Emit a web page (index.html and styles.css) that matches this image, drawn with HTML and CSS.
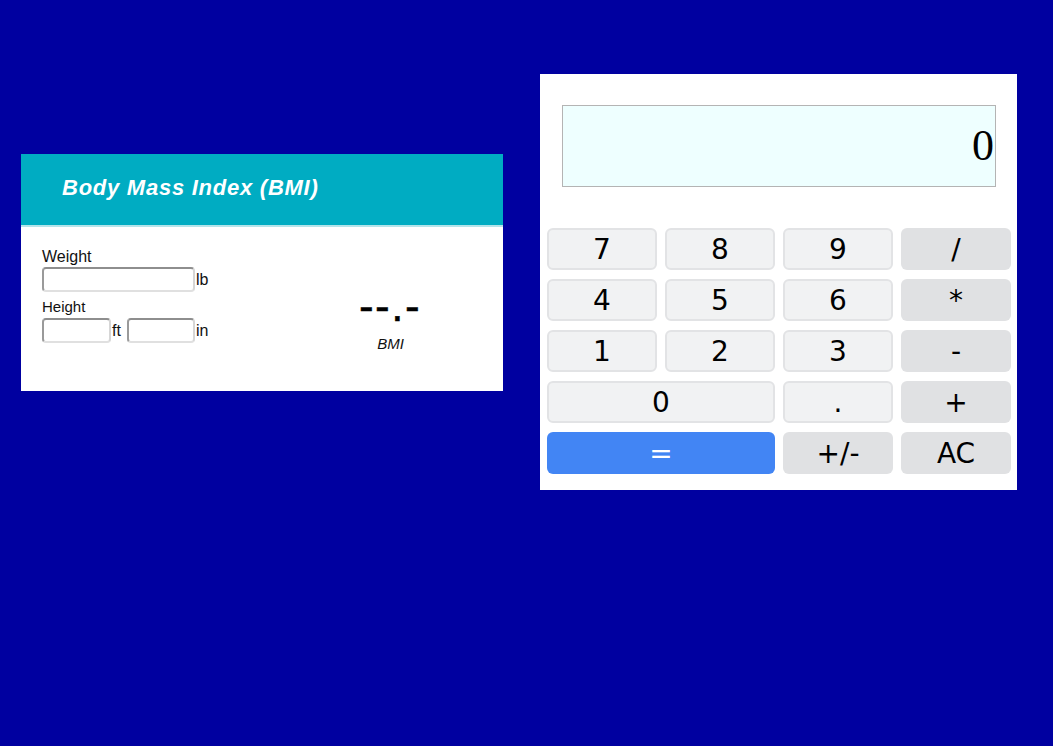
FILE: index.html
```html
<!DOCTYPE html>
<html>
<head>
<meta charset="utf-8">
<link rel="stylesheet" href="styles.css">
</head>
<body>
<div class="page">
  <section class="bmi">
    <header class="bmi-head"><h1>Body Mass Index (BMI)</h1></header>
    <div class="bmi-body">
      <div class="bmi-form">
        <label class="lbl lbl-w">Weight</label>
        <div class="row row-w"><input class="inp inp-w" type="text"><span class="unit">lb</span></div>
        <label class="lbl lbl-h">Height</label>
        <div class="row row-h"><input class="inp inp-h" type="text"><span class="unit">ft</span><input class="inp inp-h inp-in" type="text"><span class="unit">in</span></div>
      </div>
      <div class="bmi-result">
        <div class="value">--.-</div>
        <div class="caption">BMI</div>
      </div>
    </div>
  </section>
  <section class="calc">
    <div class="display">0</div>
    <div class="keys">
      <button class="key num">7</button>
      <button class="key num">8</button>
      <button class="key num">9</button>
      <button class="key op">/</button>
      <button class="key num">4</button>
      <button class="key num">5</button>
      <button class="key num">6</button>
      <button class="key op">*</button>
      <button class="key num">1</button>
      <button class="key num">2</button>
      <button class="key num">3</button>
      <button class="key op">-</button>
      <button class="key num span2">0</button>
      <button class="key num">.</button>
      <button class="key op">+</button>
      <button class="key eq span2">=</button>
      <button class="key op">+/-</button>
      <button class="key op">AC</button>
    </div>
  </section>
</div>
</body>
</html>
```
FILE: styles.css
```css
html, body {
  margin: 0;
  padding: 0;
  background: #0000a0;
  height: 100%;
}
.page {
  display: flex;
  align-items: flex-start;
  padding: 74px 0 0 21px;
  gap: 37px;
}
.bmi {
  margin-top: 80px;
  width: 482px;
  height: 237px;
  background: #fff;
  font-family: "Liberation Sans", Arial, sans-serif;
  display: flex;
  flex-direction: column;
}
.bmi-head {
  box-sizing: border-box;
  background: #00acc2;
  height: 73px;
  border-bottom: 2px solid #b4e4ea;
  display: flex;
  align-items: center;
  padding: 0 0 4px 41px;
}
.bmi-head h1 {
  margin: 0;
  color: #fff;
  font-size: 22px;
  font-weight: bold;
  font-style: italic;
  letter-spacing: 0.75px;
}
.bmi-body {
  display: flex;
  padding: 22px 0 0 21px;
}
.bmi-form {
  width: 280px;
  display: flex;
  flex-direction: column;
}
.lbl {
  color: #111;
  line-height: 1;
}
.lbl-w { font-size: 16px; height: 16px; }
.lbl-h { font-size: 15px; height: 15px; margin-top: 7px; }
.row {
  display: flex;
  align-items: center;
  font-size: 16px;
  color: #111;
}
.row-w { margin-top: 2px; }
.row-h { margin-top: 4px; }
.inp {
  box-sizing: border-box;
  height: 25px;
  border: 1px solid #c8c8c8;
  border-top: 2px solid #8e8e8e;
  border-left: 2px solid #9a9a9a;
  border-bottom: 2px solid #e0e0e0;
  border-right: 2px solid #d6d6d6;
  border-radius: 4px;
  background: #fff;
  padding: 0;
  margin: 0;
}
.inp-w { width: 153px; }
.inp-h { width: 69px; }
.inp-in { margin-left: 6px; width: 68px; }
.unit { margin-left: 1px; }
.bmi-result {
  width: 136px;
  margin-top: 35px;
  display: flex;
  flex-direction: column;
  align-items: center;
}
.value {
  font-size: 44px;
  line-height: 1;
  letter-spacing: 1.5px;
  color: #000;
  -webkit-text-stroke: 0.4px #000;
}
.caption {
  font-size: 15px;
  line-height: 1;
  font-style: italic;
  color: #111;
  margin-top: 8px;
  margin-left: 1px;
}
.calc {
  width: 477px;
  height: 416px;
  box-sizing: border-box;
  background: #fff;
  padding: 31px 7px 0 6px;
  display: flex;
  flex-direction: column;
}
.display {
  box-sizing: border-box;
  margin-left: 16px;
  width: 434px;
  height: 82px;
  background: #eeffff;
  border: 1px solid #b4b4b4;
  font-family: "Liberation Serif", "Times New Roman", serif;
  font-size: 44px;
  text-align: right;
  line-height: 80px;
  padding-right: 1px;
  color: #000;
}
.keys {
  margin-top: 41px;
  display: grid;
  grid-template-columns: repeat(4, 110px);
  grid-auto-rows: 42px;
  column-gap: 8px;
  row-gap: 9px;
  margin-left: 1px;
}
.key {
  box-sizing: border-box;
  font-family: "DejaVu Sans", Verdana, sans-serif;
  font-size: 28px;
  color: #000;
  border-radius: 6px;
  padding: 0;
  margin: 0;
  cursor: pointer;
}
.num {
  background: #f1f2f3;
  border: 2px solid #e2e3e5;
}
.op {
  background: #e0e1e3;
  border: none;
}
.eq {
  background: #4285f4;
  border: none;
  color: #fff;
}
.span2 { grid-column: span 2; }
```
